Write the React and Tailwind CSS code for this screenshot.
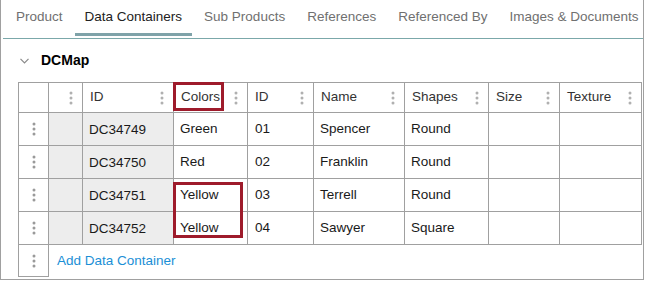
import React from 'react';

const tabs = ['Product', 'Data Containers', 'Sub Products', 'References', 'Referenced By', 'Images & Documents'];

const columns = ['', '', 'ID', 'Colors', 'ID', 'Name', 'Shapes', 'Size', 'Texture'];

const rows = [
  { id: 'DC34749', color: 'Green', num: '01', name: 'Spencer', shape: 'Round' },
  { id: 'DC34750', color: 'Red', num: '02', name: 'Franklin', shape: 'Round' },
  { id: 'DC34751', color: 'Yellow', num: '03', name: 'Terrell', shape: 'Round' },
  { id: 'DC34752', color: 'Yellow', num: '04', name: 'Sawyer', shape: 'Square' },
];

const Dots = ({ color = '#9a9a9a' }) => (
  <svg width="4" height="14" viewBox="0 0 4 14" fill={color}>
    <circle cx="2" cy="2" r="1.5" />
    <circle cx="2" cy="7" r="1.5" />
    <circle cx="2" cy="12" r="1.5" />
  </svg>
);

const App = () => {
  return (
    <div className="w-[644px] h-[280px] border-l border-r border-b border-[#a0a0a0] bg-white font-['Liberation_Sans',Arial,sans-serif]">
      {/* tabs */}
      <div className="ml-[2px] h-[39px] border-b border-[#7ba8aa] flex pl-[3px] gap-[2px]">
        {tabs.map((tab) => {
          const active = tab === 'Data Containers';
          return (
            <div key={tab} className="flex flex-col px-[10px]">
              <div
                className={`h-[33px] pt-[2px] flex items-center text-[13.5px] whitespace-nowrap ${
                  active ? 'text-[#222222]' : 'text-[#707070]'
                }`}
              >
                {tab}
              </div>
              <div className={`h-[3px] -mx-[10px] ${active ? 'bg-[#7fa3a9]' : ''}`} />
            </div>
          );
        })}
      </div>

      {/* section title */}
      <div className="h-[43px] flex items-center pl-[19px] gap-[12px]">
        <svg width="9" height="6" viewBox="0 0 9 6" fill="none" stroke="#8a8a8a" strokeWidth="1.2">
          <path d="M0.5 0.8 L4.5 4.8 L8.5 0.8" />
        </svg>
        <span className="text-[14px] font-bold text-black">DCMap</span>
      </div>

      {/* grid */}
      <div className="relative ml-[17px] w-[624px]">
        <div className="grid grid-cols-[30px_34px_91px_74px_66px_91px_84px_71px_82px] border-l border-t border-[#a0a0a0] text-[13.5px] text-[#1a1a1a]">
          {columns.map((col, i) => (
            <div
              key={`h${i}`}
              className="h-[30px] border-r border-b border-[#a0a0a0] flex items-center justify-between pl-[7px] pr-[9px] text-[#333333]"
            >
              <span>{col}</span>
              {i > 0 && <Dots color="#b0b0b0" />}
            </div>
          ))}
          {rows.map((row) => (
            <React.Fragment key={row.id}>
              <div className="h-[33px] border-r border-b border-[#a0a0a0] flex items-center justify-center">
                <Dots />
              </div>
              <div className="h-[33px] border-r border-b border-[#a0a0a0] bg-[#ededed]" />
              <div className="h-[33px] border-r border-b border-[#a0a0a0] bg-[#ededed] flex items-center pl-[6px] pt-[3px]">
                {row.id}
              </div>
              <div className="h-[33px] border-r border-b border-[#a0a0a0] flex items-center pl-[6px]">
                {row.color}
              </div>
              <div className="h-[33px] border-r border-b border-[#a0a0a0] flex items-center pl-[7px]">
                {row.num}
              </div>
              <div className="h-[33px] border-r border-b border-[#a0a0a0] flex items-center pl-[6px]">
                {row.name}
              </div>
              <div className="h-[33px] border-r border-b border-[#a0a0a0] flex items-center pl-[6px]">
                {row.shape}
              </div>
              <div className="h-[33px] border-r border-b border-[#a0a0a0]" />
              <div className="h-[33px] border-r border-b border-[#a0a0a0]" />
            </React.Fragment>
          ))}
          <div className="h-[32px] border-r border-b border-[#a0a0a0] flex items-center justify-center">
            <Dots />
          </div>
          <div className="col-span-8 h-[32px] flex items-center pl-[8px] text-[#1b8fd6]">
            Add Data Container
          </div>
        </div>

        {/* highlight boxes */}
        <div className="absolute left-[155px] top-0 w-[51px] h-[29px] border-[3px] border-[#9e1b2b]" />
        <div className="absolute left-[155px] top-[100px] w-[70px] h-[56px] border-[3px] border-[#9e1b2b]" />
      </div>
    </div>
  );
};

export default App;
